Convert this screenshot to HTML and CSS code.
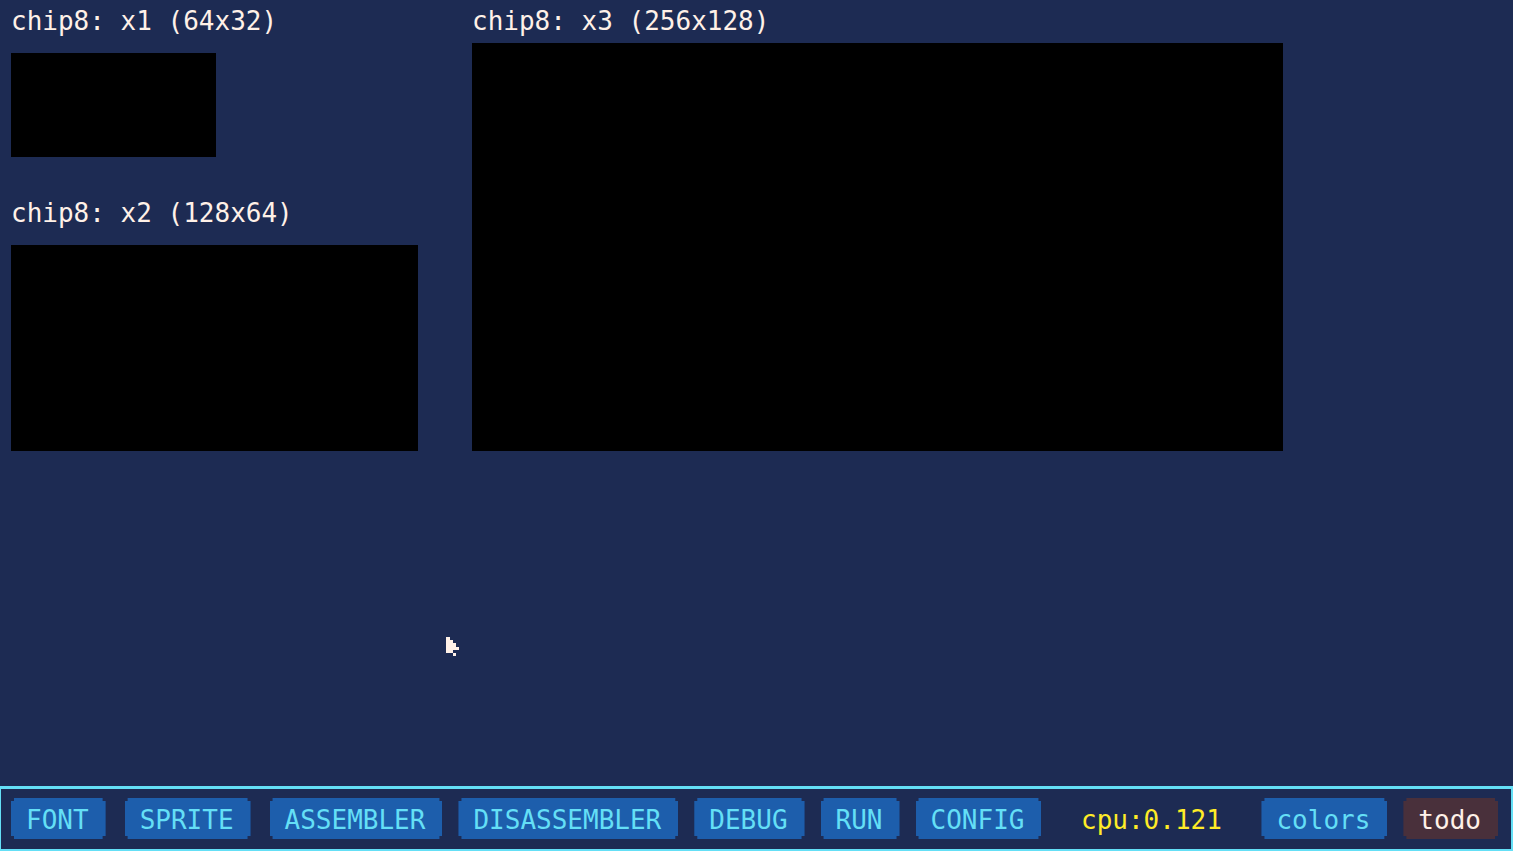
FILE: index.html
```html
<!DOCTYPE html>
<html lang="en">
<head>
<meta charset="utf-8">
<title>chip8</title>
<link rel="stylesheet" href="styles.css">
</head>
<body>
<main class="stage">
  <div class="column">
    <section class="display">
      <h2 class="title">chip8: x1 (64x32)</h2>
      <div class="screen screen-small"></div>
    </section>
    <section class="display">
      <h2 class="title">chip8: x2 (128x64)</h2>
      <div class="screen screen-medium"></div>
    </section>
  </div>
  <section class="display display-tight">
    <h2 class="title">chip8: x3 (256x128)</h2>
    <div class="screen screen-large"></div>
  </section>
</main>
<footer class="toolbar">
  <nav class="group">
    <button class="btn btn-spaced" type="button">FONT</button>
    <button class="btn btn-spaced" type="button">SPRITE</button>
    <button class="btn" type="button">ASSEMBLER</button>
    <button class="btn" type="button">DISASSEMBLER</button>
    <button class="btn" type="button">DEBUG</button>
    <button class="btn" type="button">RUN</button>
    <button class="btn" type="button">CONFIG</button>
  </nav>
  <span class="cpu">cpu:0.121</span>
  <div class="group">
    <button class="btn" type="button">colors</button>
    <button class="btn btn-todo" type="button">todo</button>
  </div>
</footer>
<svg class="cursor" width="13" height="19" viewBox="0 0 13 19" shape-rendering="crispEdges" aria-hidden="true">
  <path fill="#fff1e8" d="M0 0h4v3h3v3h3v4h3v3H7v3H0zM7 16h3v3H7z"/>
</svg>
</body>
</html>
```
FILE: styles.css
```css
* {
  box-sizing: border-box;
}

body {
  margin: 0;
  min-height: 100vh;
  display: flex;
  flex-direction: column;
  background: #1d2b53;
  color: #fff1e8;
  font: 26px/32px "DejaVu Sans Mono", monospace;
}

.stage {
  flex: 1;
  display: grid;
  grid-template-columns: 407fr 811fr 165fr;
  align-items: start;
  column-gap: 54px;
  padding: 5px 11px;
}

.column {
  display: flex;
  flex-direction: column;
  gap: 40px;
}

.display {
  display: flex;
  flex-direction: column;
  gap: 16px;
}

.display-tight {
  gap: 6px;
}

.title {
  margin: 0;
  font-size: 26px;
  font-weight: 400;
  white-space: nowrap;
}

.screen {
  background: #000;
}

.screen-small {
  width: 205px;
  aspect-ratio: 205 / 104;
}

.screen-medium {
  aspect-ratio: 407 / 206;
}

.screen-large {
  aspect-ratio: 811 / 408;
}

.toolbar {
  display: flex;
  align-items: center;
  justify-content: space-between;
  padding: 9px 13px 10px 10px;
  border: 2px solid #64dff6;
  border-top-width: 3px;
  border-left-width: 1px;
}

.group {
  display: flex;
  gap: 16px;
}

.btn {
  border: 0;
  padding: 6px 17px 3px 15px;
  background: #1d5eac;
  color: #64dff6;
  font: inherit;
  clip-path: polygon(3px 0, calc(100% - 3px) 0, calc(100% - 3px) 3px, 100% 3px, 100% calc(100% - 3px), calc(100% - 3px) calc(100% - 3px), calc(100% - 3px) 100%, 3px 100%, 3px calc(100% - 3px), 0 calc(100% - 3px), 0 3px, 3px 3px);
}

.btn-spaced {
  margin-right: 3px;
}

.btn-todo {
  background: #49303b;
  color: #fff1e8;
}

.cpu {
  padding-top: 2px;
  color: #ffec27;
}

.cursor {
  position: absolute;
  left: 446px;
  top: 637px;
}
```
